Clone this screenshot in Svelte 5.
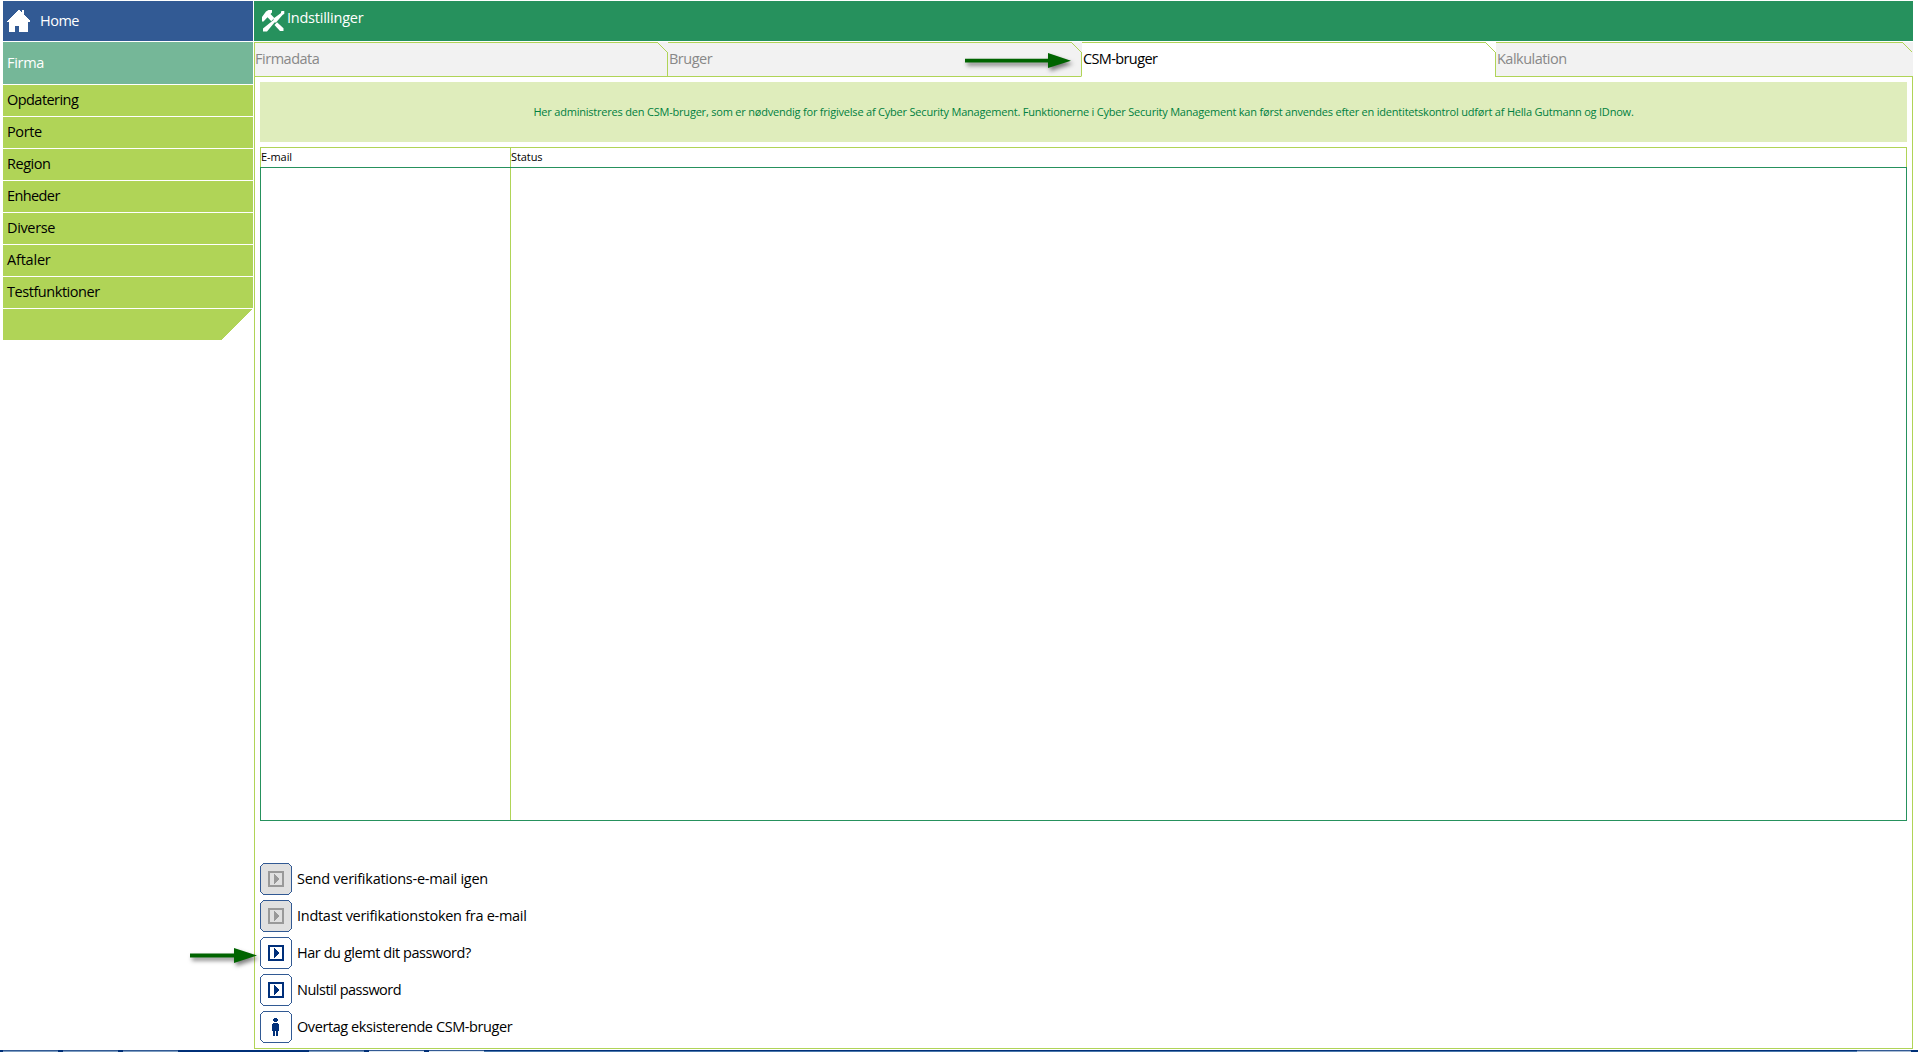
<script>
  // track: letter-spacing in px for each label
  const menu = [
    { label: 'Opdatering', track: -0.55 },
    { label: 'Porte', track: -0.4 },
    { label: 'Region', track: -0.45 },
    { label: 'Enheder', track: -0.6 },
    { label: 'Diverse', track: -0.35 },
    { label: 'Aftaler', track: -0.2 },
    { label: 'Testfunktioner', track: -0.45 }
  ];
  const tabs = [
    { label: 'Firmadata', cls: 'firmadata', track: -0.48 },
    { label: 'Bruger', cls: 'bruger', track: -0.5 },
    { label: 'CSM-bruger', cls: 'csm active', track: -0.62 },
    { label: 'Kalkulation', cls: 'kalk', track: -0.52 }
  ];
  const actions = [
    { label: 'Send verifikations-e-mail igen', icon: 'play', disabled: true, track: -0.26 },
    { label: 'Indtast verifikationstoken fra e-mail', icon: 'play', disabled: true, track: -0.28 },
    { label: 'Har du glemt dit password?', icon: 'play', disabled: false, track: -0.44 },
    { label: 'Nulstil password', icon: 'play', disabled: false, track: -0.5 },
    { label: 'Overtag eksisterende CSM-bruger', icon: 'person', disabled: false, track: -0.42 }
  ];
</script>

<div class="app">
  <div class="body">
    <nav class="side">
      <div class="home">
        <svg width="23" height="22" viewBox="0 0 23 22" shape-rendering="crispEdges"><path fill="#fff" d="M11 0h1l3 3V0h2v5l6 6v1h-2v10h-9v-6H8v6H2V12H0v-1z" /></svg>
        <span>Home</span>
      </div>
      <div class="firma"><span>Firma</span></div>
      {#each menu as item}
        <div class="item"><span style:letter-spacing="{item.track}px">{item.label}</span></div>
      {/each}
      <svg class="tail" width="250" height="31" viewBox="0 0 250 31" shape-rendering="crispEdges"><path fill="#b0d457" d="M0 0h249l-31 31H0z" /></svg>
    </nav>

    <main>
      <header>
        <svg width="24" height="24" viewBox="0 0 24 24">
          <g fill="#fff">
            <path d="M0 8 4 2.500 6.500 1H10v2.500L8.500 5l3.800 4-3 3.200-3.800-4L1.500 12.500H0z" />
            <path d="M12.500 16 15 13.200l6.500 6V22H18z" />
            <path d="M1 19.500 11.500 11v-1.500L19 4V2.500L20 2h2.300v2.800L20.500 6 14 13.500h-1.500L5 22.500H1z" />
          </g>
        </svg>
        <span>Indstillinger</span>
      </header>

      <section class="panel">
        <div class="tabs">
          {#each tabs as t}
            <div class="tab {t.cls}">
              <span style:letter-spacing="{t.track}px">{t.label}</span>
              <svg class="corner" width="11" height="11" viewBox="0 0 11 11" shape-rendering="crispEdges"><path class="fold" d="M0 0H11V11z" /><path d="M0.500 0.500 10.500 10.500" stroke="#b0d457" fill="none" /></svg>
            </div>
          {/each}
          <svg class="arrow top" width="124" height="26" viewBox="0 0 124 26"><path fill="#006400" d="M5 8.700h83V3l23 7.700L88 18v-5.500H5z" /></svg>
        </div>

        <div class="content">
          <div class="info"><span>Her administreres den CSM-bruger, som er nødvendig for frigivelse af Cyber Security Management. Funktionerne i Cyber Security Management kan først anvendes efter en identitetskontrol udført af Hella Gutmann og IDnow.</span></div>
          <div class="table">
            <div class="thead">
              <div class="c1"><span>E-mail</span></div>
              <div class="c2"><span>Status</span></div>
            </div>
            <div class="tbody"><div class="c1"></div></div>
          </div>
          <div class="actions">
            {#each actions as a}
              <div class="action">
                <svg class:disabled={a.disabled} width="32" height="32" viewBox="0 0 32 32" shape-rendering="crispEdges">
                  <path class="box" d="M3.500 .5h25l3 3v25l-3 3h-25l-3-3v-25z" />
                  {#if a.icon === 'play'}
                    <path class="glyph" fill-rule="evenodd" d="M8 8h16v16H8zm2 2v12h12V10z" />
                    <path class="glyph" d="M14 11h1v1h1v1h1v1h1v1h1v2h-1v1h-1v1h-1v1h-1v1h-1z" />
                  {:else}
                    <path class="glyph" d="M14 7h3v1h1v2h-1v1h-3v-1h-1V8h1zM13 12h5v1h1v7h-1v5h-2v-5h-1v5h-2v-5h-1v-7h1z" />
                  {/if}
                </svg>
                <span style:letter-spacing="{a.track}px">{a.label}</span>
              </div>
            {/each}
            <svg class="arrow low" width="78" height="28" viewBox="0 0 78 28"><path fill="#006400" d="M5 10.500h44V5l23 7.500-23 7.500v-5.500H5z" /></svg>
          </div>
        </div>
      </section>
    </main>
  </div>
  <footer>
    <i></i><i></i><i></i><i class="gap"></i><i></i><i class="light"></i><i class="light"></i><i class="rest"></i><i class="end"></i>
  </footer>
</div>

<style>
  :global(body) { margin: 0; overflow: hidden; background: #fff; }
  * { box-sizing: border-box; }
  .app { width: 1918px; height: 1052px; display: flex; flex-direction: column; font: 14.500px/20px 'Open Sans', 'Noto Sans', sans-serif; letter-spacing: -0.300px; color: #000; }
  .body { height: 1050px; padding: 1px 5px 1px 3px; display: flex; gap: 1px; }
  span { white-space: nowrap; display: block; }
  svg { display: block; flex: none; }
  .side { width: 250px; display: flex; flex-direction: column; gap: 1px; }
  .home { height: 40px; background: #325a94; color: #fff; display: flex; align-items: center; padding-left: 4px; gap: 10px; letter-spacing: -0.500px; }
  .home span { margin-bottom: 1px; }
  .firma { height: 42px; background: #75b798; color: #fff; display: flex; align-items: center; padding: 0 0 1px 4px; }
  .item { height: 31px; background: #b0d457; display: flex; align-items: center; padding: 0 0 2px 4px; }
  main { flex: 1; display: flex; flex-direction: column; gap: 1px; }
  header { height: 40px; background: #26915d; color: #fff; display: flex; align-items: flex-start; padding: 8px 0 0 8px; gap: 1px; letter-spacing: -0.230px; }
  header span { margin-top: -1px; }
  .panel { flex: 1; border: 1px solid #b0d457; border-top: 0; display: flex; flex-direction: column; }
  .tabs { display: flex; height: 35px; position: relative; margin-right: -1px; }
  .tab { position: relative; border-top: 1px solid #b0d457; border-bottom: 1px solid #b0d457; border-left: 1px solid #b0d457; background: #f2f2f2; color: #888; padding: 6px 0 0 1px; }
  .firmadata { width: 412px; border-left: 0; padding-left: 0; }
  .bruger, .csm { width: 414px; }
  .kalk { flex: 1; }
  .active { background: #fff; color: #000; border-bottom-color: #fff; }
  .corner { position: absolute; right: -1px; top: -1px; z-index: 1; }
  .kalk .corner { right: 0; }
  .fold { fill: #f2f2f2; }
  .active .fold { fill: #fff; }
  .arrow { position: absolute; filter: drop-shadow(2px 3px 2px rgba(0, 0, 0, .5)); }
  .top { left: 705px; top: 8px; }
  .content { flex: 1; padding: 5px 5px 1px; display: flex; flex-direction: column; }
  .info { height: 60px; background: #dfedbc; color: #008040; display: flex; align-items: center; justify-content: center; font-size: 11px; letter-spacing: -0.206px; }
  .table { margin-top: 5px; height: 674px; display: flex; flex-direction: column; font-size: 11px; line-height: 18px; letter-spacing: -0.080px; }
  .thead { height: 20px; display: flex; border: 1px solid #b0d457; border-bottom: 0; }
  .thead .c1 { width: 249px; }
  .thead .c2 { flex: 1; border-left: 1px solid #b0d457; }
  .tbody { flex: 1; border: 1px solid #26915d; display: flex; }
  .tbody .c1 { width: 250px; border-right: 1px solid #b0d457; }
  .actions { position: relative; margin-top: 42px; display: flex; flex-direction: column; gap: 5px; }
  .action { display: flex; align-items: center; gap: 5px; height: 32px; }
  .box { fill: #fff; stroke: #325a94; }
  .glyph { fill: #002f7a; }
  .disabled .box { fill: #e0e0e0; }
  .disabled .glyph { fill: #999; }
  .low { left: -75px; top: 80px; }
  footer { height: 2px; display: flex; gap: 5px; background: #003078; padding: 0 7px 0 3px; }
  i { flex: none; width: 55px; height: 2px; border-top: 1px solid #325a94; background: #7c9cc0; }
  .gap { width: 121px; visibility: hidden; }
  .light { background: #dce6f0; }
  .rest { flex: 1; border-color: #003078; background: #4a78ac; margin: 0 -5px; }
  .end { width: 54px; background: #a8bcd4; }
</style>
